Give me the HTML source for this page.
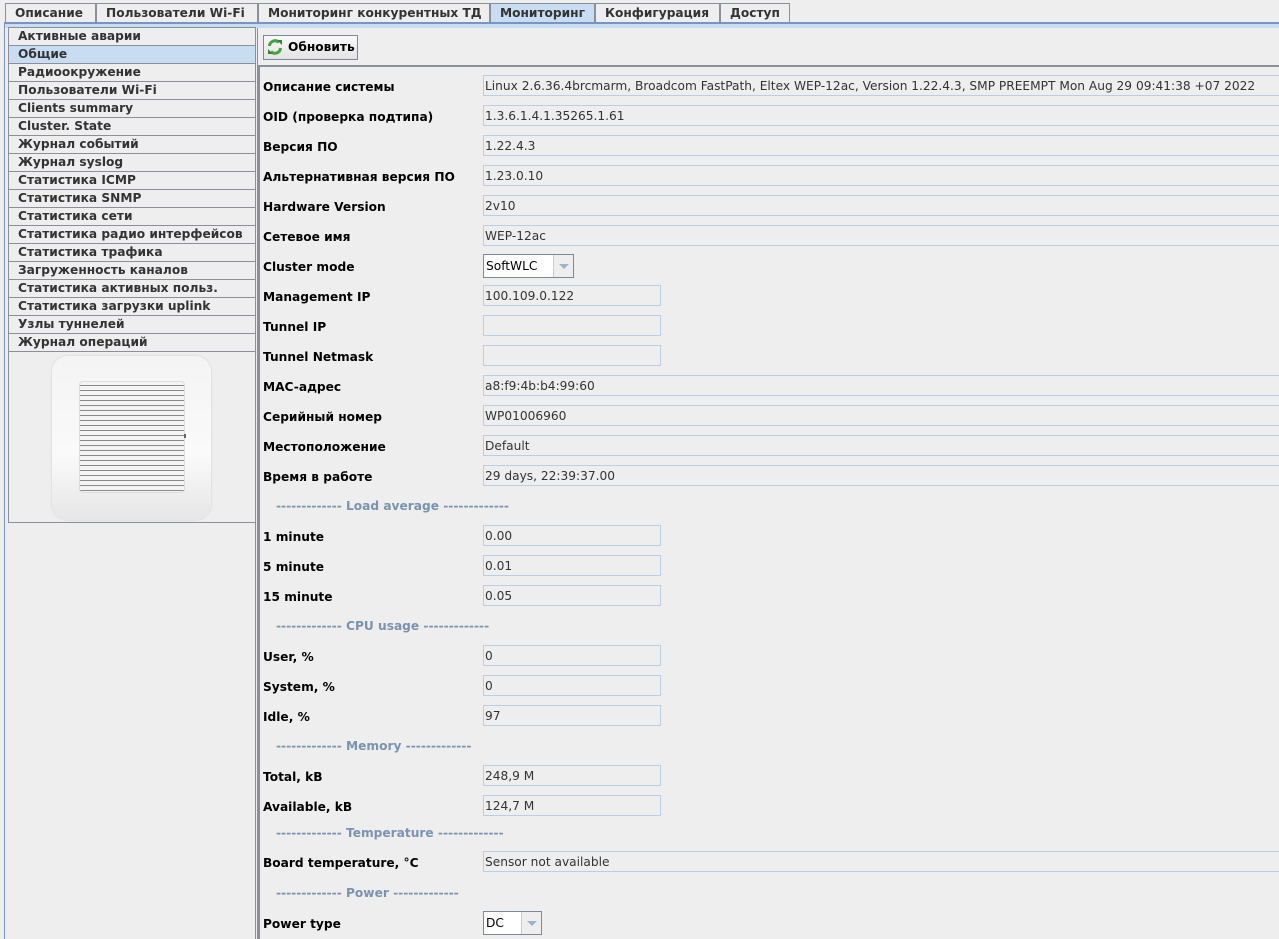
<!DOCTYPE html>
<html><head><meta charset="utf-8"><style>
*{margin:0;padding:0;box-sizing:border-box}
body{width:1279px;height:939px;background:#eeeeee;font-family:"DejaVu Sans","Liberation Sans",sans-serif;font-size:12.2px;color:#000;position:relative;overflow:hidden}
div{white-space:nowrap}
.a{position:absolute}
.tab{position:absolute;top:3px;height:19px;border:1px solid #8a8f99;border-bottom:none;background:#eeeeee;font-weight:bold;color:#333;padding-left:9px;line-height:18px;overflow:hidden}
.tab.sel{background:#c8dcf2}
.nav{position:absolute;left:9px;width:247px;height:18px;border-top:1px solid #8a8f99;font-weight:bold;color:#333;padding-left:9px;line-height:17px;overflow:hidden}
.lbl{position:absolute;left:263px;font-weight:bold;line-height:16px}
.f{position:absolute;left:483px;height:21px;border:1px solid #b8cfe5;background:#eeeeee;padding-left:1px;line-height:21px;color:#333;overflow:hidden}
.sep{position:absolute;left:276px;font-weight:bold;color:#7a93b0;line-height:16px}
.cb{position:absolute;left:483px;height:24px;border:1px solid #7a8a9a;background:#fff;line-height:22px;padding-left:2px;color:#000}
.cb i{position:absolute;right:0;top:0;width:20px;height:22px;border-left:1px solid #b8cfe5;background:#eeeeee}
.cb i:after{content:"";position:absolute;left:5px;top:9px;border-left:5px solid transparent;border-right:5px solid transparent;border-top:5px solid #9bb4cc}
</style></head><body>
<div class="tab" style="left:5px;width:91px">Описание</div>
<div class="tab" style="left:96px;width:162px">Пользователи Wi-Fi</div>
<div class="tab" style="left:258px;width:232px">Мониторинг конкурентных ТД</div>
<div class="tab sel" style="left:490px;width:105px">Мониторинг</div>
<div class="tab" style="left:595px;width:125px">Конфигурация</div>
<div class="tab" style="left:720px;width:70px">Доступ</div>
<div class="a" style="left:4px;top:22px;width:1275px;height:2px;background:#7a93c0"></div>
<div class="a" style="left:4px;top:24px;width:1275px;height:4px;background:#c8dcf2"></div>
<div class="a" style="left:4px;top:22px;width:1px;height:917px;background:#7a93c0"></div>
<div class="a" style="left:8px;top:27px;width:248px;height:496px;border:1px solid #8a8f99;border-top:none;background:#eeeeee"></div>
<div class="nav" style="top:27px">Активные аварии</div>
<div class="nav" style="top:45px;background:#c8dcf2">Общие</div>
<div class="nav" style="top:63px">Радиоокружение</div>
<div class="nav" style="top:81px">Пользователи Wi-Fi</div>
<div class="nav" style="top:99px">Clients summary</div>
<div class="nav" style="top:117px">Cluster. State</div>
<div class="nav" style="top:135px">Журнал событий</div>
<div class="nav" style="top:153px">Журнал syslog</div>
<div class="nav" style="top:171px">Статистика ICMP</div>
<div class="nav" style="top:189px">Статистика SNMP</div>
<div class="nav" style="top:207px">Статистика сети</div>
<div class="nav" style="top:225px">Статистика радио интерфейсов</div>
<div class="nav" style="top:243px">Статистика трафика</div>
<div class="nav" style="top:261px">Загруженность каналов</div>
<div class="nav" style="top:279px">Статистика активных польз.</div>
<div class="nav" style="top:297px">Статистика загрузки uplink</div>
<div class="nav" style="top:315px">Узлы туннелей</div>
<div class="nav" style="top:333px">Журнал операций</div>
<div class="a" style="left:9px;top:351px;width:246px;height:1px;background:#8a8f99"></div>
<div class="a" style="left:52px;top:356px;width:159px;height:164px;border-radius:16px;background:linear-gradient(#f4f4f4,#fafafa 60%,#e6e6e6);box-shadow:0 0 2px #ccc"></div>
<div class="a" style="left:79px;top:381px;width:106px;height:112px;border:1px solid #ddd;border-radius:4px;background:repeating-linear-gradient(#f4f4f4 0 3px,#8a8a8a 3px 4px,#f4f4f4 4px 5px)" ></div>
<div class="a" style="left:184px;top:434px;width:2px;height:4px;background:#666"></div>
<div class="a" style="left:255px;top:28px;width:1px;height:911px;background:#8a8f99"></div>
<div class="a" style="left:257px;top:28px;width:1px;height:911px;background:#8a8f99"></div>
<div class="a" style="left:263px;top:35px;width:95px;height:25px;border:1px solid #7a8a9a;background:linear-gradient(#fafafa,#e3e3e3);font-weight:bold;line-height:23px;padding-left:24px">Обновить</div>
<svg class="a" style="left:267px;top:39px" width="16" height="16" viewBox="0 0 16 16"><path d="M2.5 7A5.5 5.5 0 0 1 12 3.5" fill="none" stroke="#3fa63f" stroke-width="3"/><path d="M13.5 9A5.5 5.5 0 0 1 4 12.5" fill="none" stroke="#3fa63f" stroke-width="3"/><path d="M10 1l5 0 0 5z M6 15l-5 0 0-5z" fill="#2c8c2c"/></svg>
<div class="a" style="left:258px;top:65px;width:1021px;height:874px;border-top:2px solid #8a8f99;border-left:2px solid #8a8f99"></div>
<div class="lbl" style="top:79px">Описание системы</div><div class="f" style="top:75px;width:800px">Linux 2.6.36.4brcmarm, Broadcom FastPath, Eltex WEP-12ac, Version 1.22.4.3, SMP PREEMPT Mon Aug 29 09:41:38 +07 2022</div>
<div class="lbl" style="top:109px">OID (проверка подтипа)</div><div class="f" style="top:105px;width:800px">1.3.6.1.4.1.35265.1.61</div>
<div class="lbl" style="top:139px">Версия ПО</div><div class="f" style="top:135px;width:800px">1.22.4.3</div>
<div class="lbl" style="top:169px">Альтернативная версия ПО</div><div class="f" style="top:165px;width:800px">1.23.0.10</div>
<div class="lbl" style="top:199px">Hardware Version</div><div class="f" style="top:195px;width:800px">2v10</div>
<div class="lbl" style="top:229px">Сетевое имя</div><div class="f" style="top:225px;width:800px">WEP-12ac</div>
<div class="lbl" style="top:259px">Cluster mode</div><div class="cb" style="top:254px;width:91px">SoftWLC<i></i></div>
<div class="lbl" style="top:289px">Management IP</div><div class="f" style="top:285px;width:178px">100.109.0.122</div>
<div class="lbl" style="top:319px">Tunnel IP</div><div class="f" style="top:315px;width:178px"></div>
<div class="lbl" style="top:349px">Tunnel Netmask</div><div class="f" style="top:345px;width:178px"></div>
<div class="lbl" style="top:379px">MAC-адрес</div><div class="f" style="top:375px;width:800px">a8:f9:4b:b4:99:60</div>
<div class="lbl" style="top:409px">Серийный номер</div><div class="f" style="top:405px;width:800px">WP01006960</div>
<div class="lbl" style="top:439px">Местоположение</div><div class="f" style="top:435px;width:800px">Default</div>
<div class="lbl" style="top:469px">Время в работе</div><div class="f" style="top:465px;width:800px">29 days, 22:39:37.00</div>
<div class="sep" style="top:498px">------------- Load average -------------</div>
<div class="lbl" style="top:529px">1 minute</div><div class="f" style="top:525px;width:178px">0.00</div>
<div class="lbl" style="top:559px">5 minute</div><div class="f" style="top:555px;width:178px">0.01</div>
<div class="lbl" style="top:589px">15 minute</div><div class="f" style="top:585px;width:178px">0.05</div>
<div class="sep" style="top:618px">------------- CPU usage -------------</div>
<div class="lbl" style="top:649px">User, %</div><div class="f" style="top:645px;width:178px">0</div>
<div class="lbl" style="top:679px">System, %</div><div class="f" style="top:675px;width:178px">0</div>
<div class="lbl" style="top:709px">Idle, %</div><div class="f" style="top:705px;width:178px">97</div>
<div class="sep" style="top:738px">------------- Memory -------------</div>
<div class="lbl" style="top:769px">Total, kB</div><div class="f" style="top:765px;width:178px">248,9 M</div>
<div class="lbl" style="top:799px">Available, kB</div><div class="f" style="top:795px;width:178px">124,7 M</div>
<div class="sep" style="top:825px">------------- Temperature -------------</div>
<div class="lbl" style="top:855px">Board temperature, °C</div><div class="f" style="top:851px;width:800px">Sensor not available</div>
<div class="sep" style="top:885px">------------- Power -------------</div>
<div class="lbl" style="top:916px">Power type</div><div class="cb" style="top:911px;width:59px">DC<i></i></div>
</body></html>
